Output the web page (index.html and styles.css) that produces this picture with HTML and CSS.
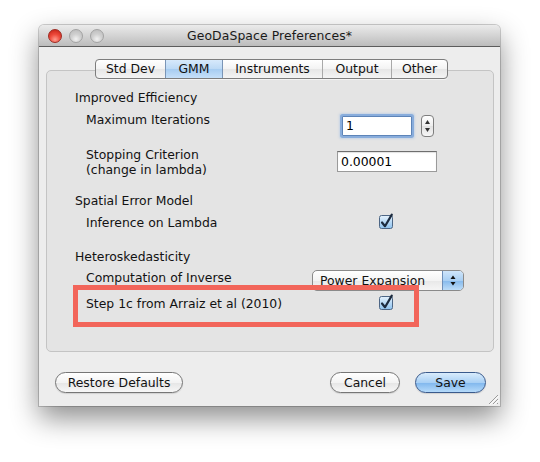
FILE: index.html
```html
<!DOCTYPE html>
<html>
<head>
<meta charset="utf-8">
<title>GeoDaSpace Preferences</title>
<link rel="stylesheet" href="styles.css">
</head>
<body>
<div class="window">
  <div class="titlebar">
    <div class="lights">
      <span class="light red"></span>
      <span class="light"></span>
      <span class="light"></span>
    </div>
    <div class="title">GeoDaSpace Preferences*</div>
    <div></div>
  </div>
  <div class="content">
    <div class="panel">
      <div class="tabs">
        <div class="tab t1">Std Dev</div>
        <div class="tab t2 selected">GMM</div>
        <div class="tab t3">Instruments</div>
        <div class="tab t4">Output</div>
        <div class="tab t5">Other</div>
      </div>
      <div class="form">
        <div class="heading h-first">Improved Efficiency</div>
        <div class="row r-iter">
          <div class="label l-iter">Maximum Iterations</div>
          <div class="field focused">1</div>
          <div class="stepper">
            <svg width="13" height="22" viewBox="0 0 13 22"><path d="M6.5 5 L9 9 L4 9 Z" fill="#333"/><path d="M6.5 17 L9 13 L4 13 Z" fill="#333"/></svg>
          </div>
        </div>
        <div class="row r-stop">
          <div class="label two-line l-stop">Stopping Criterion<br>(change in lambda)</div>
          <div class="field wide">0.00001</div>
        </div>
        <div class="heading h-mid">Spatial Error Model</div>
        <div class="row r-inf">
          <div class="label l-check">Inference on Lambda</div>
          <div class="checkbox">
            <svg width="15" height="16" viewBox="0 0 15 16"><defs><linearGradient id="cb1" x1="0" y1="0" x2="0" y2="1"><stop offset="0" stop-color="#e6f2fc"/><stop offset="0.5" stop-color="#b9daf6"/><stop offset="1" stop-color="#8ec2ee"/></linearGradient></defs><rect x="0.5" y="2.5" width="13" height="13" rx="2" fill="url(#cb1)" stroke="#4d6685"/><path d="M3 9.5 L6 13.2 L12.8 1.6" fill="none" stroke="#1c2b3f" stroke-width="2.2" stroke-linecap="round" stroke-linejoin="round"/></svg>
          </div>
        </div>
        <div class="heading h-het">Heteroskedasticity</div>
        <div class="row r-comp">
          <div class="label l-comp">Computation of Inverse</div>
          <div class="popup">
            <span class="popup-text">Power Expansion</span>
            <span class="popup-arrows">
              <svg width="20" height="19" viewBox="0 0 20 19"><path d="M10 4.5 L12.5 8 L7.5 8 Z" fill="#111"/><path d="M10 14.5 L12.5 11 L7.5 11 Z" fill="#111"/></svg>
            </span>
          </div>
        </div>
        <div class="row r-step">
          <div class="label l-check">Step 1c from Arraiz et al (2010)</div>
          <div class="checkbox">
            <svg width="15" height="16" viewBox="0 0 15 16"><defs><linearGradient id="cb2" x1="0" y1="0" x2="0" y2="1"><stop offset="0" stop-color="#e6f2fc"/><stop offset="0.5" stop-color="#b9daf6"/><stop offset="1" stop-color="#8ec2ee"/></linearGradient></defs><rect x="0.5" y="2.5" width="13" height="13" rx="2" fill="url(#cb2)" stroke="#4d6685"/><path d="M3 9.5 L6 13.2 L12.8 1.6" fill="none" stroke="#1c2b3f" stroke-width="2.2" stroke-linecap="round" stroke-linejoin="round"/></svg>
          </div>
        </div>
      </div>
    </div>
    <div class="buttons">
      <div class="btn b-restore">Restore Defaults</div>
      <div class="btn b-cancel">Cancel</div>
      <div class="btn b-save">Save</div>
    </div>
  </div>
  <svg class="grip" width="12" height="12" viewBox="0 0 12 12">
    <path d="M11 2 L2 11 M11 6 L6 11 M11 10 L10 11" stroke="#9a9a9a" stroke-width="1"/>
    <path d="M11.8 2.8 L2.8 11.8 M11.8 6.8 L6.8 11.8" stroke="#fff" stroke-width="1"/>
  </svg>
</div>
</body>
</html>
```

FILE: styles.css
```css
html, body {
  margin: 0;
  padding: 0;
  background: #ffffff;
}

body {
  width: 540px;
  height: 462px;
  overflow: hidden;
  font-family: "DejaVu Sans", "Liberation Sans", sans-serif;
  font-size: 12.4px;
  color: #121212;
}

.window {
  position: relative;
  margin: 25px 0 0 39px;
  width: 461px;
  height: 381px;
  background: #ededed;
  border-radius: 5px 5px 0 0;
  box-shadow: 0 0 0 1px rgba(0, 0, 0, 0.18), 0 12px 28px rgba(0, 0, 0, 0.45);
  display: flex;
  flex-direction: column;
}

.titlebar {
  box-sizing: border-box;
  height: 22px;
  border-radius: 5px 5px 0 0;
  background: linear-gradient(#ebebeb, #d6d6d6 45%, #bcbcbc);
  border-bottom: 1px solid #5c5c5c;
  display: grid;
  grid-template-columns: 1fr auto 1fr;
  align-items: center;
}

.lights {
  display: flex;
  gap: 7px;
  padding-left: 9px;
}

.light {
  width: 14px;
  height: 14px;
  border-radius: 50%;
  box-sizing: border-box;
  border: 1px solid #a3a3a3;
  background: radial-gradient(circle at 50% 75%, #f2f2f2 0%, #d0d0d0 45%, #b9b9b9 100%);
}

.light.red {
  border-color: #9d2a22;
  background: radial-gradient(circle at 50% 80%, #ff9c8e 0%, #ee4b3c 45%, #c01e12 100%);
}

.title {
  font-size: 12.4px;
  color: #1a1a1a;
  letter-spacing: 0.1px;
}

.content {
  flex: 1;
  display: flex;
  flex-direction: column;
}

.panel {
  box-sizing: border-box;
  margin: 23px 6px 0 7px;
  height: 282px;
  border: 1px solid #c4c4c4;
  border-radius: 5px;
  background: #e4e4e4;
  display: flex;
  flex-direction: column;
}

.tabs {
  box-sizing: border-box;
  margin: -12px 0 0 48px;
  height: 20px;
  display: flex;
  align-self: flex-start;
  border: 1px solid #7d7d7d;
  border-radius: 4px;
  overflow: hidden;
  background: linear-gradient(#ffffff, #f3f3f3 50%, #e6e6e6 51%, #f4f4f4);
  box-shadow: 0 1px 0 rgba(255, 255, 255, 0.6);
}

.tab {
  box-sizing: border-box;
  height: 18px;
  line-height: 18px;
  text-align: center;
  border-left: 1px solid #a9a9a9;
}

.tab.t1 { width: 69px; border-left: none; }
.tab.t2 { width: 57px; }
.tab.t3 { width: 100px; }
.tab.t4 { width: 69px; }
.tab.t5 { width: 56px; }

.tab.selected {
  background: linear-gradient(#d7e9fb, #bcd9f5 50%, #a6ccf1 51%, #c6e0f9);
  border-left-color: #7a95b6;
}

.tab.t3 { border-left-color: #7a95b6; }

.form {
  padding-left: 28px;
  display: flex;
  flex-direction: column;
}

.heading {
  line-height: 16px;
  height: 16px;
}

.h-first { margin-top: 11px; }
.h-mid { margin-top: 16px; }
.h-het { margin-top: 18px; }

.row {
  display: flex;
  align-items: flex-start;
  padding-left: 11px;
}

.label {
  line-height: 16px;
  flex: none;
}

.label.two-line { line-height: 15px; }

.l-iter { width: 256px; }
.l-stop { width: 251px; }
.l-check { width: 293px; }
.l-comp { width: 226px; }

.r-iter { margin-top: 6px; height: 25px; }
.r-stop { margin-top: 10px; }
.r-inf { margin-top: 6px; }
.r-comp { margin-top: 5px; }
.r-step { margin-top: 5px; position: relative; }

.r-step::after {
  content: "";
  position: absolute;
  left: -2px;
  top: -11px;
  width: 346px;
  height: 42px;
  box-sizing: border-box;
  border: 5px solid #f2655a;
}

.field {
  box-sizing: border-box;
  background: #ffffff;
  border: 1px solid #9a9a9a;
  border-top-color: #6e6e6e;
  box-shadow: inset 0 1px 1px rgba(0, 0, 0, 0.12);
  padding-left: 3px;
  color: #000;
}

.field.focused {
  margin-top: 4px;
  width: 70px;
  height: 20px;
  line-height: 18px;
  border-color: #5d84b8;
  border-radius: 1px;
  box-shadow: 0 0 0 2px rgba(116, 160, 218, 0.75), 0 0 2px 3px rgba(140, 180, 230, 0.35);
}

.field.wide {
  margin-top: 4px;
  width: 100px;
  height: 21px;
  line-height: 19px;
}

.stepper {
  box-sizing: border-box;
  margin: 3px 0 0 9px;
  width: 13px;
  height: 22px;
  border: 1px solid #7e7e7e;
  border-radius: 4px;
  background: linear-gradient(#ffffff, #eeeeee 50%, #e2e2e2 51%, #f6f6f6);
  display: flex;
  align-items: center;
  justify-content: center;
  overflow: hidden;
}

.stepper svg {
  flex: none;
}

.checkbox {
  margin-top: -2px;
  width: 15px;
  height: 16px;
}

.popup {
  box-sizing: border-box;
  width: 152px;
  height: 21px;
  border: 1px solid #8a8a8a;
  border-radius: 5px;
  background: linear-gradient(#ffffff, #f4f4f4 50%, #e8e8e8 51%, #f5f5f5);
  display: flex;
  overflow: hidden;
}

.popup-text {
  flex: 1;
  padding-left: 7px;
  line-height: 19px;
}

.popup-arrows {
  width: 20px;
  height: 19px;
  border-left: 1px solid #6f8fb8;
  background: linear-gradient(#cfe5fa, #a9cff3 50%, #85b9ec 51%, #bcdcf8);
}

.buttons {
  margin-top: 20px;
  display: flex;
  padding: 0 14px 0 16px;
}

.btn {
  box-sizing: border-box;
  height: 21px;
  line-height: 19px;
  text-align: center;
  border: 1px solid #767676;
  border-radius: 11px;
  background: linear-gradient(#ffffff, #f3f3f3 50%, #e5e5e5 51%, #f7f7f7);
  box-shadow: 0 1px 1px rgba(0, 0, 0, 0.12);
}

.b-restore { width: 128px; }
.b-cancel { width: 70px; margin-left: auto; }
.b-save {
  width: 71px;
  margin-left: 15px;
  border-color: #3a5a8c;
  background: linear-gradient(#d9ecfc, #a9d0f5 50%, #7fb6ed 51%, #b5dafa);
}

.grip {
  position: absolute;
  right: 1px;
  bottom: 1px;
}
```
